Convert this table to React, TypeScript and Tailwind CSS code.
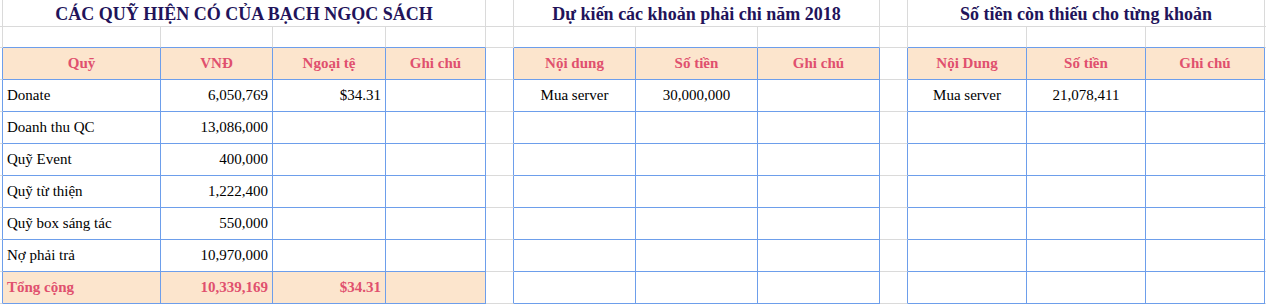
import React from 'react';
import clsx from 'clsx';

type Edge = 'g' | 'b' | 'n';

const RIGHT: Record<Edge, string> = {
  g: 'border-r border-r-[#dadada]',
  b: 'border-r border-r-[#6d9eeb]',
  n: '',
};

const BOTTOM: Record<Edge, string> = {
  g: 'border-b border-b-[#dadada]',
  b: 'border-b border-b-[#6d9eeb]',
  n: '',
};

interface CellProps {
  r?: Edge;
  b?: Edge;
  className?: string;
  children?: React.ReactNode;
}

const Cell: React.FC<CellProps> = ({ r = 'g', b = 'g', className, children }) => (
  <div className={clsx('flex items-center overflow-hidden whitespace-nowrap', RIGHT[r], BOTTOM[b], className)}>
    {children}
  </div>
);

const funds = [
  ['Donate', '6,050,769', '$34.31'],
  ['Doanh thu QC', '13,086,000', ''],
  ['Quỹ Event', '400,000', ''],
  ['Quỹ từ thiện', '1,222,400', ''],
  ['Quỹ box sáng tác', '550,000', ''],
  ['Nợ phải trả', '10,970,000', ''],
];

const planned = [['Mua server', '30,000,000'], ['', ''], ['', ''], ['', ''], ['', ''], ['', ''], ['', '']];
const missing = [['Mua server', '21,078,411'], ['', ''], ['', ''], ['', ''], ['', ''], ['', ''], ['', '']];

const head = 'bg-[#fce5cd] justify-center font-bold text-[#e0506e]';
const title = 'justify-center font-bold text-[18px] text-[#22135a] pt-[3px]';

const App: React.FC = () => {
  return (
    <div className="w-[1266px] h-[304px] overflow-hidden bg-white font-['Liberation_Serif',serif] text-[15px] text-black">
      <div className="grid grid-cols-[3px_158px_112px_113px_100px_28px_122px_122px_122px_28px_119px_119px_119px_1px] grid-rows-[27px_21px_32px_32px_32px_32px_32px_32px_32px_32px]">
        {/* title row */}
        <Cell />
        <Cell className={clsx(title, 'col-span-4')}>CÁC QUỸ HIỆN CÓ CỦA BẠCH NGỌC SÁCH</Cell>
        <Cell />
        <Cell className={clsx(title, 'col-span-3')}>Dự kiến các khoản phải chi năm 2018</Cell>
        <Cell />
        <Cell className={clsx(title, 'col-span-3')}>Số tiền còn thiếu cho từng khoản</Cell>
        <Cell r="n" />

        {/* spacer row */}
        <Cell />
        <Cell b="b" />
        <Cell b="b" />
        <Cell b="b" />
        <Cell b="b" />
        <Cell />
        <Cell b="b" />
        <Cell b="b" />
        <Cell b="b" />
        <Cell />
        <Cell b="b" />
        <Cell b="b" />
        <Cell b="b" />
        <Cell r="n" />

        {/* headers */}
        <Cell r="b" />
        <Cell r="b" b="b" className={head}>Quỹ</Cell>
        <Cell r="b" b="b" className={head}>VNĐ</Cell>
        <Cell r="b" b="b" className={head}>Ngoại tệ</Cell>
        <Cell r="b" b="b" className={head}>Ghi chú</Cell>
        <Cell r="b" />
        <Cell r="b" b="b" className={head}>Nội dung</Cell>
        <Cell r="b" b="b" className={head}>Số tiền</Cell>
        <Cell r="b" b="b" className={head}>Ghi chú</Cell>
        <Cell r="b" />
        <Cell r="b" b="b" className={head}>Nội Dung</Cell>
        <Cell r="b" b="b" className={head}>Số tiền</Cell>
        <Cell r="b" b="b" className={head}>Ghi chú</Cell>
        <Cell r="n" />

        {/* body rows */}
        {planned.map((p, i) => {
          const total = i === 6;
          const f = total ? ['Tổng cộng', '10,339,169', '$34.31'] : funds[i];
          const m = missing[i];
          const tone = total ? 'bg-[#fce5cd] font-bold text-[#e0506e]' : '';
          return (
            <React.Fragment key={i}>
              <Cell r="b" />
              <Cell r="b" b="b" className={clsx(tone, 'pl-[4px]')}>{f[0]}</Cell>
              <Cell r="b" b="b" className={clsx(tone, 'justify-end pr-[4px]')}>{f[1]}</Cell>
              <Cell r="b" b="b" className={clsx(tone, 'justify-end pr-[4px]')}>{f[2]}</Cell>
              <Cell r="b" b="b" className={tone} />
              <Cell r="b" />
              <Cell r="b" b="b" className="justify-center">{p[0]}</Cell>
              <Cell r="b" b="b" className="justify-center">{p[1]}</Cell>
              <Cell r="b" b="b" />
              <Cell r="b" />
              <Cell r="b" b="b" className="justify-center">{m[0]}</Cell>
              <Cell r="b" b="b" className="justify-center">{m[1]}</Cell>
              <Cell r="b" b="b" />
              <Cell r="n" />
            </React.Fragment>
          );
        })}
      </div>
    </div>
  );
};

export default App;
